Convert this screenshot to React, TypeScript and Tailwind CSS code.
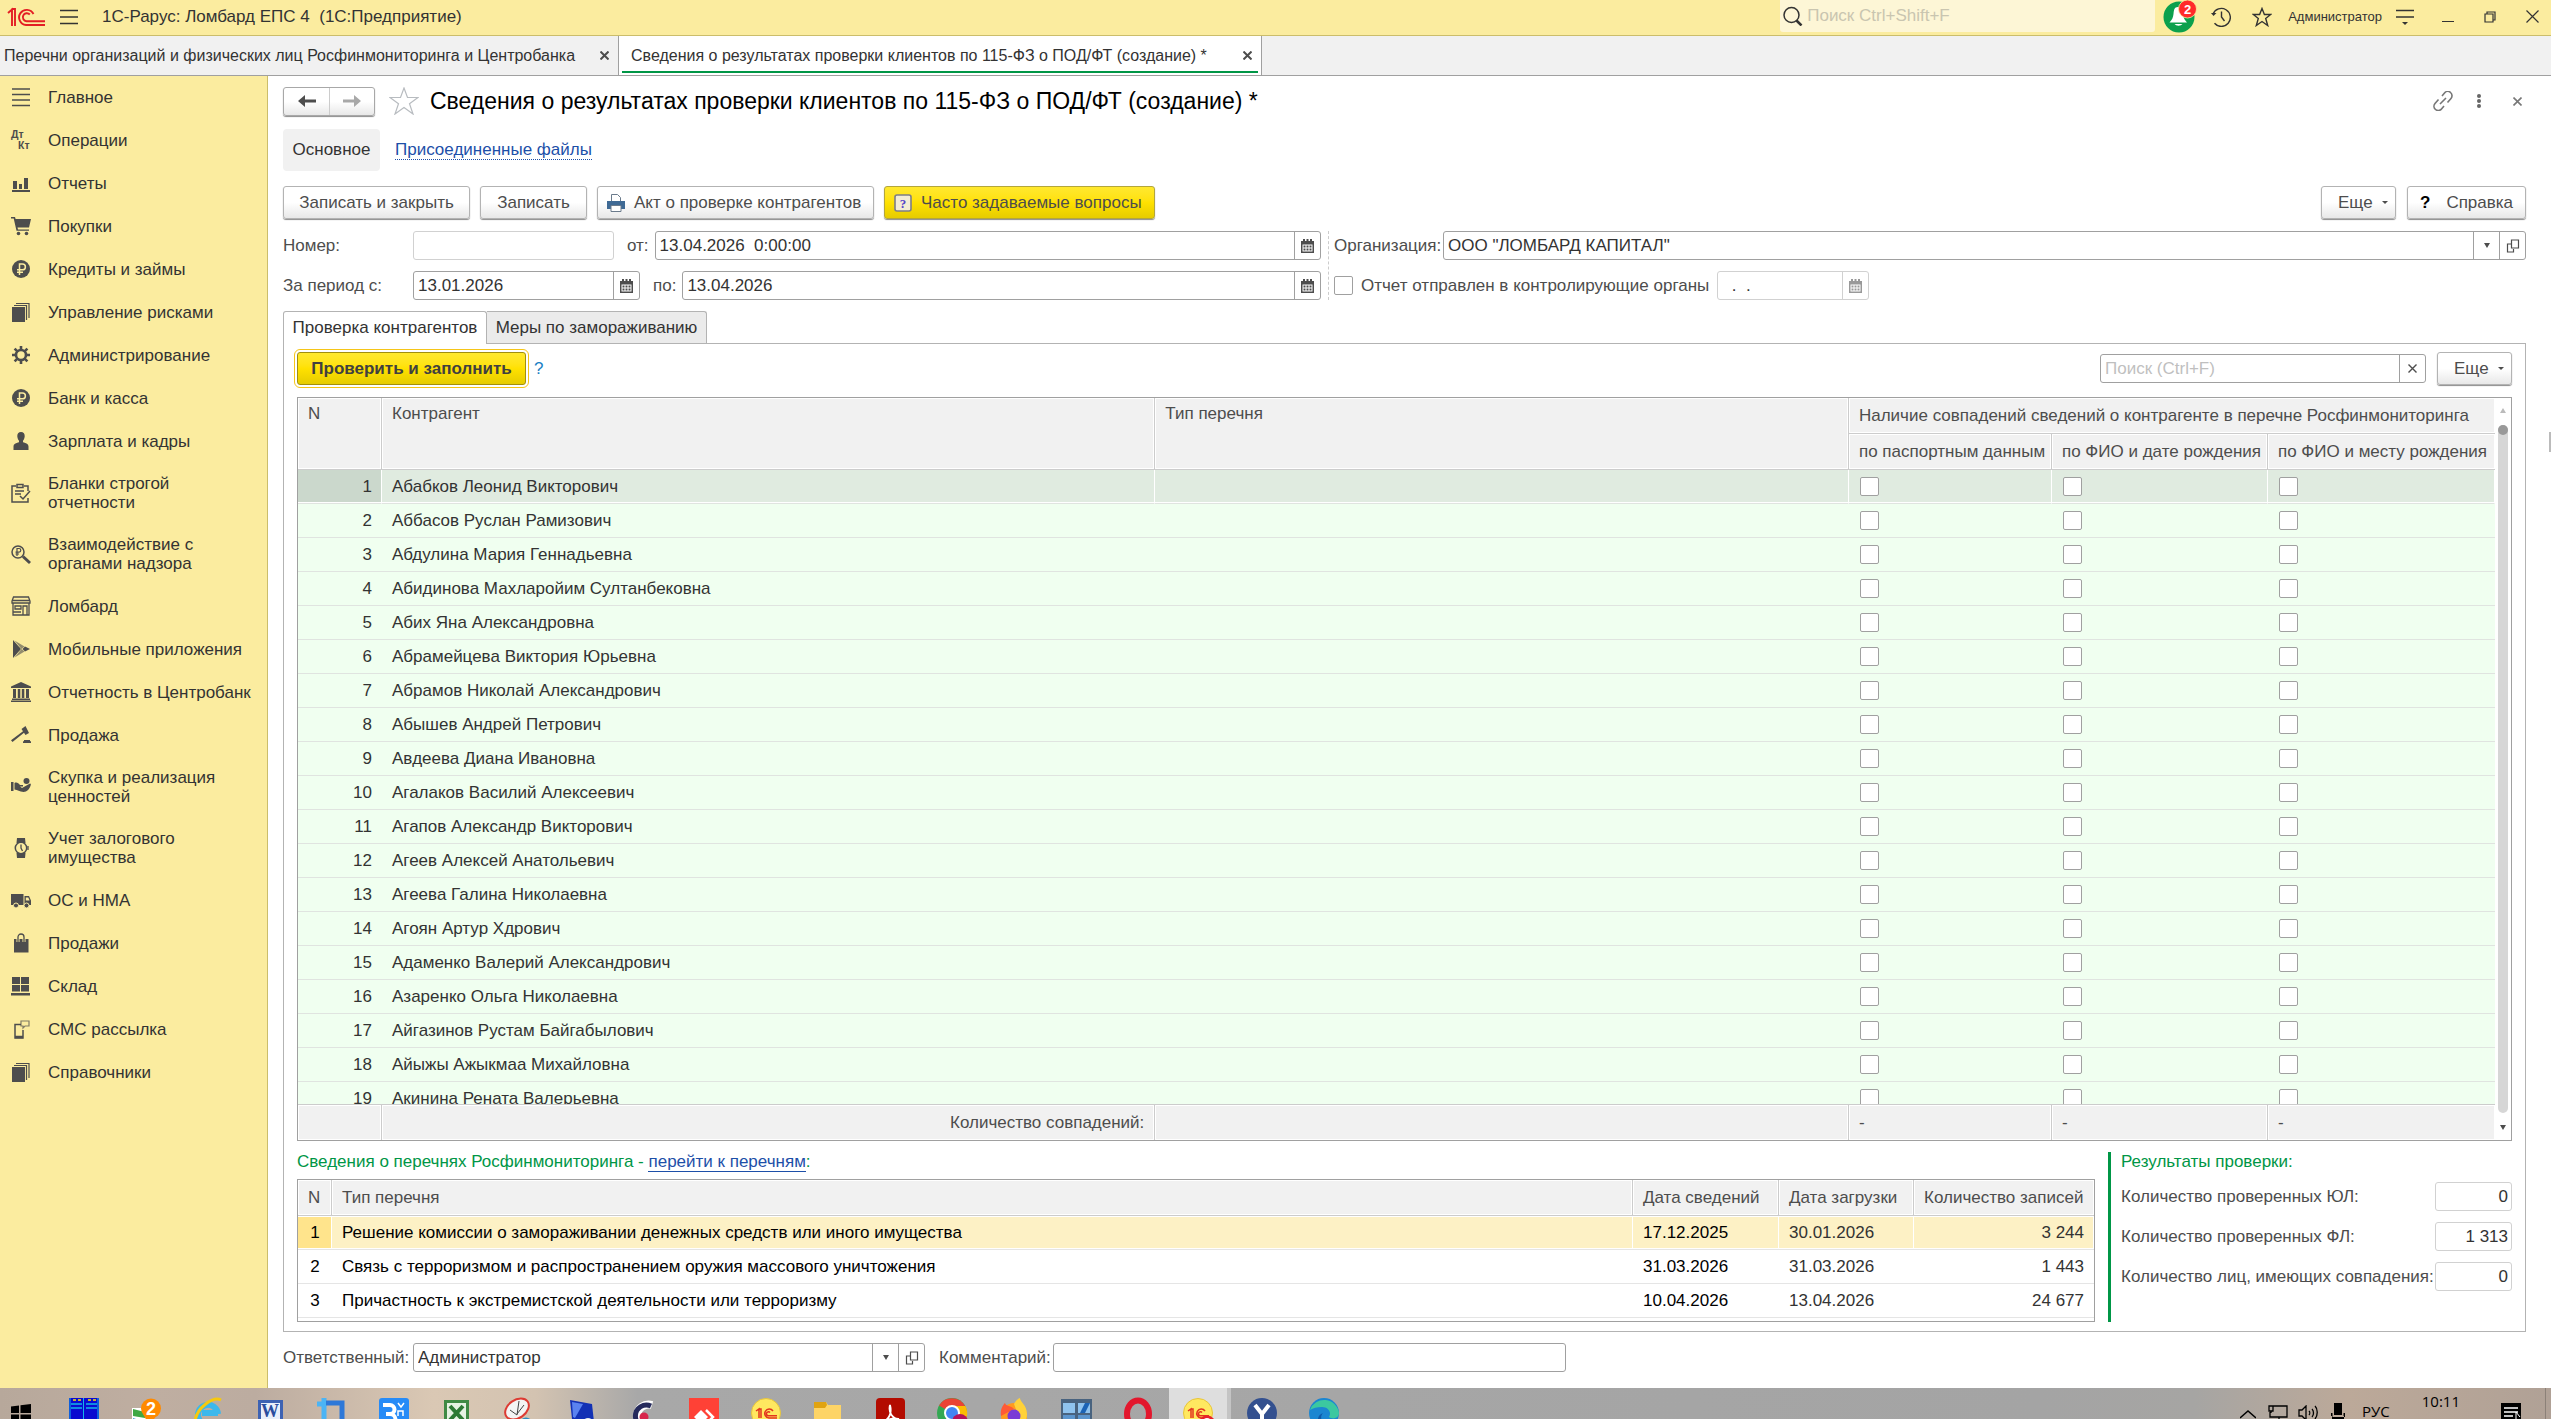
import type { ReactNode } from 'react';

const menu: { icon: string; title: string }[] = [
  { icon: 'main', title: 'Главное' },
  { icon: 'dtkt', title: 'Операции' },
  { icon: 'chart', title: 'Отчеты' },
  { icon: 'cart', title: 'Покупки' },
  { icon: 'ruble', title: 'Кредиты и займы' },
  { icon: 'books', title: 'Управление рисками' },
  { icon: 'gear', title: 'Администрирование' },
  { icon: 'ruble', title: 'Банк и касса' },
  { icon: 'person', title: 'Зарплата и кадры' },
  { icon: 'clipboard', title: 'Бланки строгой отчетности' },
  { icon: 'lens', title: 'Взаимодействие с органами надзора' },
  { icon: 'shop', title: 'Ломбард' },
  { icon: 'play', title: 'Мобильные приложения' },
  { icon: 'bank', title: 'Отчетность в Центробанк' },
  { icon: 'hammer', title: 'Продажа' },
  { icon: 'hand', title: 'Скупка и реализация ценностей' },
  { icon: 'watch', title: 'Учет залогового имущества' },
  { icon: 'truck', title: 'ОС и НМА' },
  { icon: 'bag', title: 'Продажи' },
  { icon: 'boxes', title: 'Склад' },
  { icon: 'sms', title: 'СМС рассылка' },
  { icon: 'books', title: 'Справочники' },
];

const clients = [
  'Абабков Леонид Викторович',
  'Аббасов Руслан Рамизович',
  'Абдулина Мария Геннадьевна',
  'Абидинова Махларойим Султанбековна',
  'Абих Яна Александровна',
  'Абрамейцева Виктория Юрьевна',
  'Абрамов Николай Александрович',
  'Абышев Андрей Петрович',
  'Авдеева Диана Ивановна',
  'Агалаков Василий Алексеевич',
  'Агапов Александр Викторович',
  'Агеев Алексей Анатольевич',
  'Агеева Галина Николаевна',
  'Агоян Артур Хдрович',
  'Адаменко Валерий Александрович',
  'Азаренко Ольга Николаевна',
  'Айгазинов Рустам Байгабылович',
  'Айыжы Ажыкмаа Михайловна',
  'Акинина Рената Валерьевна',
];

const checks = ['по паспортным данным', 'по ФИО и дате рождения', 'по ФИО и месту рождения'];

const lists = [
  ['Решение комиссии о замораживании денежных средств или иного имущества', '17.12.2025', '30.01.2026', '3 244'],
  ['Связь с терроризмом и распространением оружия массового уничтожения', '31.03.2026', '31.03.2026', '1 443'],
  ['Причастность к экстремистской деятельности или терроризму', '10.04.2026', '13.04.2026', '24 677'],
];

const menuIcons: Record<string, ReactNode> = {
  main: <path d="M1 2h18M1 7.5h18M1 13h18M1 18.5h18" stroke="currentColor" strokeWidth="1.3" />,
  dtkt: (
    <g fontFamily="Liberation Sans, sans-serif" fontWeight="bold" fontSize="10.5">
      <text x="0" y="8">Дт</text>
      <text x="7" y="19">Кт</text>
    </g>
  ),
  chart: <path d="M1 17h18v2H1zM2 8h4v8H2zM8 11h3v5H8zM13 5h4v11h-4z" />,
  cart: (
    <>
      <path d="M0 1h4l.6 2H20l-2 8.500H6.500l.5 2H18v1.300H5.500L2.700 2.500H0z" />
      <circle cx="7.500" cy="17.500" r="1.800" />
      <circle cx="15.500" cy="17.500" r="1.800" />
    </>
  ),
  ruble: (
    <>
      <circle cx="10" cy="10" r="9" />
      <path d="M8.500 16V5h3a2.800 2.800 0 0 1 0 5.800H6M6 13.300h6" fill="none" stroke="#fbec9f" strokeWidth="1.500" />
    </>
  ),
  books: (
    <>
      <path d="M1 5h13v15H1z" />
      <path d="M3 3.500h12.500V18M5 1.500h13V16" fill="none" stroke="currentColor" strokeWidth="1.200" />
    </>
  ),
  gear: (
    <>
      <circle cx="10" cy="10" r="5" fill="none" stroke="currentColor" strokeWidth="2.600" />
      <path d="M10 1v4M10 15v4M1 10h4M15 10h4M3.600 3.600l2.800 2.800M13.600 13.600l2.800 2.800M3.600 16.400l2.800-2.800M13.600 6.400l2.800-2.800" stroke="currentColor" strokeWidth="2.600" />
    </>
  ),
  person: <path d="M10 1c2.500 0 4 1.800 3.700 4.500-.2 2-.9 3.300-1.700 4.300v1.400c3 .9 5.500 1.600 5.500 4.300V19h-15v-3.500c0-2.700 2.500-3.400 5.500-4.300V9.800C7.200 8.800 6.500 7.500 6.300 5.500 6 2.800 7.500 1 10 1z" />,
  clipboard: (
    <g fill="none" stroke="currentColor" strokeWidth="1.500">
      <path d="M5 3H1v16h16v-4M17 8V3h-4" />
      <path d="M6 1.500h6v3H6zM4 8h9M4 11h6M9 13l3 3 7-8" />
    </g>
  ),
  lens: (
    <g fill="none" stroke="currentColor">
      <circle cx="7" cy="8" r="6" strokeWidth="1.500" />
      <path d="M6 12V4.500h2a1.800 1.800 0 0 1 0 3.600H4.500M4.500 10H8" strokeWidth="1.200" />
      <path d="M12 12.500l7 6.500" strokeWidth="3" />
    </g>
  ),
  shop: (
    <g fill="none" stroke="currentColor" strokeWidth="1.300">
      <path d="M2.500 1h15l1.500 4v2H1V5zM2 7v12h16V7M1 4.500h18M4 10h6v3H4zM12 19v-9h4v9M2 16h8" />
    </g>
  ),
  play: (
    <>
      <path d="M2 1v18l8-9z" />
      <path d="M3.500 1.500l10 6-3 2.500zM3.500 18.500l10-6-3-2.500z" opacity=".6" />
      <path d="M14 7.500l5 2.500-5 2.500-2.500-2.500z" />
    </>
  ),
  bank: <path d="M10 0l10 4.500V6H0V4.500zM2 7h3v9H2zM6.800 7h2.500v9H6.800zM10.800 7h2.500v9h-2.500zM15 7h3v9h-3zM1 16.500h18V18H1zM0 18.500h20V20H0z" />,
  hammer: <path d="M10.500 4l4-3 3.500 7-3.500 2-1.500-2.200L1.500 17 0 15.200 12 6.300zM13 15h6v1.200h1V18h-8v-1.800h1z" />,
  hand: (
    <>
      <path d="M0 5h2.500v9H0zM3.500 6c2-1 4 0 5.500 2h3v1.500H9l2 1.500 8-4.500c1 .3 1 1.200.7 1.800-1 3.700-3.700 6.700-7.200 6.700-4 0-6-2.500-9-2.500z" />
      <circle cx="15.500" cy="4" r="3" />
    </>
  ),
  watch: (
    <>
      <path d="M6 0h8l.5 5h-9zM5.500 15h9L14 20H6z" />
      <circle cx="10" cy="10" r="5.700" fill="none" stroke="currentColor" strokeWidth="1.500" />
      <path d="M10 6.500V10l1.500 3M17 8v4" stroke="currentColor" strokeWidth="1.300" fill="none" />
    </>
  ),
  truck: (
    <>
      <path d="M0 4h12.500v11H0zM13.500 6H18l2 4.500V15h-6.500z" />
      <path d="M14.800 7.500h2.500l1.300 3h-3.800z" fill="#fbec9f" />
      <circle cx="5" cy="15.500" r="2.500" stroke="#fbec9f" />
      <circle cx="15.500" cy="15.500" r="2.500" stroke="#fbec9f" />
    </>
  ),
  bag: (
    <>
      <path d="M3 6h14.500v13.500H3z" />
      <path d="M7 9V4a3 3 0 0 1 6 0v5" fill="none" stroke="#fbec9f" strokeWidth="3" />
      <path d="M7 9V4a3 3 0 0 1 6 0v5" fill="none" stroke="currentColor" strokeWidth="1.300" />
    </>
  ),
  boxes: <path d="M1 1h8v7H1zM10 1h8v7h-8zM1 9h8v6.500H1zM10 9h8v6.500h-8zM0 17h19v2.500H0z" />,
  sms: (
    <g fill="none" stroke="currentColor">
      <path d="M10 5.500H4V19h8v-8" strokeWidth="1.500" />
      <path d="M4 18h8" strokeWidth="2.500" />
      <path d="M10 2h8v5h-4l-2 2V7h-2z" strokeWidth="1.200" opacity=".7" />
    </g>
  ),
};

function Logo({ className }: { className: string }) {
  return (
    <svg viewBox="0 0 38 20" className={className} fill="none" stroke="#e31e24" strokeWidth="1.900">
      <path d="M1 6l4-3.500V19M8 19V2H4.500" />
      <path d="M26.500 7A7.600 7.600 0 1 0 19 18h19" />
      <path d="M22.800 7.500A4 4 0 1 0 19.500 14.200H38" />
    </svg>
  );
}

function CalendarIcon() {
  return (
    <svg viewBox="0 0 13 14" className="w-[13px] h-3.5" fill="currentColor">
      <path fillRule="evenodd" d="M0 2h2V0h2v2h1.500V0h2v2H9V0h2v2h2v12H0zM1.500 5.500v7h10v-7z" />
      <path d="M2.500 6.500h2v2h-2zM5.500 6.500h2v2h-2zM8.500 6.500h2v2h-2zM2.500 9.500h2v2h-2zM5.500 9.500h2v2h-2zM8.500 9.500h2v2h-2z" />
    </svg>
  );
}

function OpenIcon() {
  return (
    <svg viewBox="0 0 14 14" className="size-[14px]" fill="none" stroke="currentColor" strokeWidth="1.200">
      <path d="M5.500 1h7v8h-7zM5 5H1.500v8h6v-3" />
    </svg>
  );
}

function Triangle() {
  return <span className="border-x-[3px] border-t-[5px] border-x-transparent border-t-[#4d4d4d]" />;
}

const plain = 'border-[#b3b3b3] bg-linear-to-b from-white via-white to-[#e8e8e8]';
const yellow = 'border-[#b3a63c] bg-linear-to-b from-[#ffe82e] via-[#ffe100] to-[#e6cc00]';

function Button({ children, accent, className = '' }: { children: ReactNode; accent?: boolean; className?: string }) {
  return (
    <button className={`h-[33px] flex items-center rounded-[3px] border shadow-[0_1px_1px_#8c8c8c] whitespace-nowrap text-[#4d4d4d] ${accent ? yellow : plain} ${className}`}>
      {children}
    </button>
  );
}

function MoreButton() {
  return (
    <Button className="w-[75px] pl-4 gap-[9px]">
      Еще
      <span className="border-x-[3px] border-t-[3px] border-x-transparent border-t-[#4d4d4d]" />
    </Button>
  );
}

type FieldProps = {
  id: string;
  value?: string;
  label?: string;
  placeholder?: string;
  buttons?: { name: string; icon: ReactNode }[];
  disabled?: boolean;
  right?: boolean;
  className?: string;
};

function Field({ id, value = '', label, placeholder, buttons = [], disabled, right, className = '' }: FieldProps) {
  return (
    <div className={`h-[29px] flex rounded-[3px] border bg-white ${disabled ? 'border-[#d1d1d1] text-[#999]' : 'border-[#a0a0a0] text-[#4d4d4d]'} ${className}`}>
      <input
        id={id}
        aria-label={label}
        defaultValue={value}
        placeholder={placeholder}
        readOnly={disabled}
        className={`min-w-0 flex-1 outline-none bg-transparent text-[#333] placeholder:text-[#bfbfbf] ${right ? 'text-right px-[3px]' : 'px-1'}`}
      />
      {buttons.map((b) => (
        <button key={b.name} aria-label={b.name} className={`w-[26px] shrink-0 border-l flex items-center justify-center ${disabled ? 'border-[#d1d1d1]' : 'border-[#a0a0a0]'}`}>
          {b.icon}
        </button>
      ))}
    </div>
  );
}

const calendar = [{ name: 'Выбрать дату', icon: <CalendarIcon /> }];
const reference = [
  { name: 'Выбрать из списка', icon: <Triangle /> },
  { name: 'Открыть', icon: <OpenIcon /> },
];

function TopBar() {
  return (
    <header className="h-9 shrink-0 flex items-center pb-0.5 border-b border-[#cbbd6b] bg-[#fbec9f]">
      <Logo className="ml-[7px] w-[38px] h-5" />
      <button aria-label="Меню функций" className="ml-[15px]">
        <svg viewBox="0 0 18 16" className="w-[18px] h-4" stroke="#333" strokeWidth="1.500"><path d="M0 1.500h18M0 8h18M0 14.500h18" /></svg>
      </button>
      <span className="ml-6 whitespace-pre text-[#333]">1С-Рарус: Ломбард ЕПС 4  (1С:Предприятие)</span>

      <label className="ml-auto self-start w-[375px] h-8 flex items-center gap-1 pl-[3px] rounded-b-[3px] bg-[#fdf6d6]">
        <svg viewBox="0 0 20 20" className="size-5" fill="none" stroke="#333" strokeWidth="1.500">
          <circle cx="8.500" cy="9" r="7.500" />
          <path d="M13.500 14.500l5 5" strokeWidth="2.500" />
        </svg>
        <input aria-label="Поиск" placeholder="Поиск Ctrl+Shift+F" className="flex-1 outline-none bg-transparent placeholder:text-[#c9c5b0]" />
      </label>
      <button aria-label="Уведомления" className="ml-2">
        <svg viewBox="0 0 34 34" className="size-[34px]">
          <circle cx="16" cy="17" r="15.500" fill="#0ba04d" />
          <path d="M15 7c4 0 4.500 3 5 7 .4 3.500 1.500 6 4 8.500H6.500c2.500-2.500 3.600-5 4-8.500.5-4 .5-7 4.500-7zM11.500 24h8a4.500 3 0 0 1-8 0z" fill="#fff" />
          <circle cx="24.500" cy="9" r="9" fill="#ff2a2a" stroke="#fbec9f" strokeWidth=".8" />
          <text x="24.500" y="13.500" textAnchor="middle" fontSize="13" fontWeight="bold" fill="#fff" fontFamily="Liberation Sans, sans-serif">2</text>
        </svg>
      </button>
      <button aria-label="История" className="ml-3.5">
        <svg viewBox="0 0 20 20" className="size-5" fill="none" stroke="#333" strokeWidth="1.400">
          <path d="M2 7A9 9 0 1 1 3.500 16.300M10.500 4.500V10l3 4" />
          <path d="M0 6h5.500L2.500 9z" fill="#333" stroke="none" />
        </svg>
      </button>
      <button aria-label="Избранное" className="ml-[21px]">
        <svg viewBox="0 0 20 20" className="size-5" fill="none" stroke="#333" strokeWidth="1.400">
          <path d="M10 1.500l2.400 6h6.300l-5 4 2 7L10 14.500l-5.700 4 2-7-5-4h6.300z" />
        </svg>
      </button>
      <span className="ml-4 text-[13px] text-[#333]">Администратор</span>
      <button aria-label="Сервис и настройки" className="ml-3.5">
        <svg viewBox="0 0 18 18" className="size-[18px]" stroke="#333" strokeWidth="1.300">
          <path d="M0 2.500h18M0 9h18" />
          <path d="M6 14h6l-3 3z" fill="#333" stroke="none" />
        </svg>
      </button>
      <button aria-label="Свернуть" className="ml-7"><svg viewBox="0 0 12 12" className="size-3" stroke="#333"><path d="M0 10.500h12" /></svg></button>
      <button aria-label="Развернуть" className="ml-[30px]">
        <svg viewBox="0 0 12 12" className="size-3" fill="none" stroke="#333" strokeWidth="1.200"><path d="M1 3h8v8H1zM3 3V1h8v8H9" /></svg>
      </button>
      <button aria-label="Закрыть программу" className="ml-[30px] mr-3">
        <svg viewBox="0 0 13 13" className="size-[13px]" stroke="#333" strokeWidth="1.200"><path d="M.5.5l12 12M12.500.5l-12 12" /></svg>
      </button>
    </header>
  );
}

function CloseMark() {
  return <svg viewBox="0 0 9 9" className="size-[9px]" stroke="#4d4d4d" strokeWidth="2"><path d="M.5.5l8 8M8.500.5l-8 8" /></svg>;
}

function WindowTabs() {
  return (
    <div className="h-10 shrink-0 flex border-b border-[#a0a0a0] bg-[#f1f1f1] text-base leading-5 text-[#333] whitespace-nowrap">
      <div className="w-[619px] flex items-center justify-between pl-1 pr-[9px] border-r border-[#a0a0a0]">
        <button>Перечни организаций и физических лиц Росфинмониторинга и Центробанка</button>
        <button aria-label="Закрыть вкладку"><CloseMark /></button>
      </div>
      <div className="w-[643px] flex bg-white px-[3px] pb-0.5 border-r border-[#a0a0a0]">
        <div className="flex-1 flex items-center justify-between pl-[9px] pr-1.5 pt-1 border-b-2 border-[#009646]">
          <button>Сведения о результатах проверки клиентов по 115-ФЗ о ПОД/ФТ (создание) *</button>
          <button aria-label="Закрыть вкладку"><CloseMark /></button>
        </div>
      </div>
    </div>
  );
}

function Sidebar() {
  return (
    <nav className="w-[268px] shrink-0 border-r border-[#cbbd6b] bg-[#fbec9f]">
      {menu.map((item) => (
        <a key={item.title} href="#" className="min-h-[43px] flex items-center gap-[17px] pl-[11px] pr-4 pt-[11px] pb-3 leading-[19px] text-[#333]">
          <svg viewBox="0 0 20 20" className="size-5 -my-1 shrink-0 overflow-visible text-[#4d4d4d]" fill="currentColor">{menuIcons[item.icon]}</svg>
          <span className={item.title.length > 24 ? 'w-[170px]' : 'whitespace-nowrap'}>{item.title}</span>
        </a>
      ))}
    </nav>
  );
}

function TitleRow() {
  return (
    <div className="h-[30px] flex items-center">
      <div className="h-[29px] flex rounded-[3px] border border-[#a8a8a8] bg-linear-to-b from-white via-white to-[#e8e8e8] shadow-[0_1px_1px_#8c8c8c]">
        <button aria-label="Назад" className="w-[46px] flex items-center justify-center border-r border-[#ccc]">
          <svg viewBox="0 0 18 12" className="w-[18px] h-3" fill="#4d4d4d"><path d="M0 6l7-6v4.500h11v3H7V12z" /></svg>
        </button>
        <button aria-label="Вперед" className="w-[44px] flex items-center justify-center">
          <svg viewBox="0 0 18 12" className="w-[18px] h-3" fill="#a8a8a8"><path d="M18 6l-7-6v4.500H0v3h11V12z" /></svg>
        </button>
      </div>
      <button aria-label="Добавить в избранное" className="ml-3.5">
        <svg viewBox="0 0 30 28" className="w-[30px] h-7" fill="none" stroke="#b8bcc0" strokeWidth="1.200">
          <path d="M15 1l3.500 9.500H29l-8.500 6.200L24 27l-9-6.500L6 27l3.500-10.300L1 10.500h10.500z" />
        </svg>
      </button>
      <h1 className="ml-[11px] text-[23px] text-black whitespace-nowrap">Сведения о результатах проверки клиентов по 115-ФЗ о ПОД/ФТ (создание) *</h1>
      <button aria-label="Получить ссылку" className="ml-auto">
        <svg viewBox="0 0 20 20" className="size-5" fill="none" stroke="#777" strokeWidth="1.600">
          <path d="M9 5l2.500-3A4 4 0 0 1 18 7.500l-3.500 4M11 15l-2.500 3A4 4 0 0 1 2 12.500l3.500-4M7 13l6-6" />
        </svg>
      </button>
      <button aria-label="Меню формы" className="ml-[23px]">
        <svg viewBox="0 0 6 14" className="w-1.5 h-3.5" fill="#666"><circle cx="3" cy="2" r="2" /><circle cx="3" cy="7" r="2" /><circle cx="3" cy="12" r="2" /></svg>
      </button>
      <button aria-label="Закрыть" className="ml-[31px] mr-1">
        <svg viewBox="0 0 9 9" className="size-[9px]" stroke="#777" strokeWidth="1.600"><path d="M.5.5l8 8M8.500.5l-8 8" /></svg>
      </button>
    </div>
  );
}

function Toolbar() {
  return (
    <div className="mt-[15px] h-[33px] flex items-start gap-2.5">
      <Button className="w-[187px] justify-center">Записать и закрыть</Button>
      <Button className="w-[107px] justify-center">Записать</Button>
      <Button className="w-[277px] pl-[9px] gap-[9px]">
        <svg viewBox="0 0 18 18" className="size-[18px]">
          <path d="M4.500 8V.5h6l3 3V8z" fill="#fff" stroke="#6b7b8c" />
          <path d="M0 7h18v8H0z" fill="#3f6a95" />
          <path d="M4 11.500h10v6H4z" fill="#fff" stroke="#6b7b8c" />
        </svg>
        Акт о проверке контрагентов
      </Button>
      <Button accent className="w-[271px] pl-[9px] gap-[9px]">
        <svg viewBox="0 0 18 18" className="size-[18px]">
          <rect x="1" y="1" width="16" height="16" rx="2" fill="#f3ecd5" stroke="#7d7d86" strokeWidth="1.600" />
          <text x="9" y="14" textAnchor="middle" fontSize="13" fontWeight="bold" fill="#5645c9" fontFamily="Liberation Serif, serif">?</text>
        </svg>
        Часто задаваемые вопросы
      </Button>
      <div className="ml-auto flex gap-[11px]">
        <MoreButton />
        <Button className="w-[119px] pl-3 gap-4"><span className="font-bold text-black">?</span>Справка</Button>
      </div>
    </div>
  );
}

function Requisites() {
  return (
    <div className="mt-3 grid grid-cols-[1038fr_1192fr] gap-[13px] text-[#4d4d4d]">
      <div className="flex flex-col gap-[11px]">
        <div className="flex items-center">
          <label htmlFor="number" className="w-[130px]">Номер:</label>
          <Field id="number" disabled className="w-[201px]" />
          <label htmlFor="date" className="ml-[13px] mr-1.5">от:</label>
          <Field id="date" value="13.04.2026  0:00:00" buttons={calendar} className="flex-1" />
        </div>
        <div className="flex items-center">
          <label htmlFor="from" className="w-[130px]">За период с:</label>
          <Field id="from" value="13.01.2026" buttons={calendar} className="w-[227px]" />
          <label htmlFor="to" className="ml-[13px] mr-1.5">по:</label>
          <Field id="to" value="13.04.2026" buttons={calendar} className="flex-1" />
        </div>
      </div>
      <div className="relative flex flex-col gap-[11px]">
        <span className="absolute inset-y-0 -left-[6px] border-l border-dashed border-[#ccc]" />
        <div className="flex items-center">
          <label htmlFor="org" className="w-[109px] whitespace-nowrap">Организация:</label>
          <Field id="org" value={'ООО "ЛОМБАРД КАПИТАЛ"'} buttons={reference} className="flex-1" />
        </div>
        <div className="flex items-center">
          <input id="sent" type="checkbox" className="size-[19px] appearance-none rounded-[2px] border border-[#a0a0a0] bg-white" />
          <label htmlFor="sent" className="ml-2 mr-2 whitespace-nowrap">Отчет отправлен в контролирующие органы</label>
          <Field id="sentDate" label="Дата отправки" value="  .  ." disabled buttons={calendar} className="w-[152px]" />
        </div>
      </div>
    </div>
  );
}

const head = 'border-r border-b border-[#ccc] bg-[#f1f1f1] shadow-[inset_0_0_0_1px_#fff] font-normal text-left px-2.5 text-[#4d4d4d]';

function ClientsTable() {
  return (
    <div className="mt-3 min-h-0 flex-1 flex border border-[#a0a0a0]">
      <div className="flex-1 overflow-hidden">
        <table className="w-full table-fixed border-separate border-spacing-0">
          <colgroup>
            <col className="w-[84px]" />
            <col className="w-[35.2%]" />
            <col />
            <col className="w-[203px]" />
            <col className="w-[216px]" />
            <col className="w-[227px]" />
          </colgroup>
          <thead>
            <tr className="h-9">
              <th rowSpan={2} className={`${head} align-top pt-1.5`}>N</th>
              <th rowSpan={2} className={`${head} align-top pt-1.5`}>Контрагент</th>
              <th rowSpan={2} className={`${head} align-top pt-1.5`}>Тип перечня</th>
              <th colSpan={3} className={`${head} border-r-0 whitespace-nowrap`}>Наличие совпадений сведений о контрагенте в перечне Росфинмониторинга</th>
            </tr>
            <tr className="h-9">
              {checks.map((c, i) => (
                <th key={c} className={`${head} whitespace-nowrap ${i === 2 ? 'border-r-0' : ''}`}>{c}</th>
              ))}
            </tr>
          </thead>
          <tbody className="text-[#333]">
            {clients.map((name, i) => (
              <tr key={name} className={`h-[34px] ${i === 0 ? 'bg-[#e0ebe0] *:border-r *:border-r-white *:shadow-[inset_0_-1px_#fff]' : 'bg-[#f0fff0]'} *:border-b *:border-b-[#e0e4e0]`}>
                <td className={`text-right ${i === 0 ? 'pr-[9px] bg-[#cbd8cc]' : 'pr-2.5'}`}>{i + 1}</td>
                <td className="px-2.5">{name}</td>
                <td />
                {checks.map((c) => (
                  <td key={c} className="px-[11px]">
                    <input type="checkbox" aria-label={`${name}: ${c}`} className="block size-[19px] appearance-none rounded-[2px] border border-[#a0a0a0] bg-white" />
                  </td>
                ))}
              </tr>
            ))}
          </tbody>
          <tfoot className="sticky bottom-0">
            <tr className="h-9 *:border-t *:border-t-[#ccc]">
              <td className={`${head} border-b-0`} />
              <td className={`${head} border-b-0`}><div className="text-right">Количество совпадений:</div></td>
              <td className={`${head} border-b-0`} />
              {checks.map((c, i) => (
                <td key={c} className={`${head} border-b-0 ${i === 2 ? 'border-r-0' : ''}`}>-</td>
              ))}
            </tr>
          </tfoot>
        </table>
      </div>
      {/* Scrollbar */}
      <div className="w-4 flex flex-col items-center py-2.5 bg-white">
        <span className="border-x-[3px] border-b-[5px] border-x-transparent border-b-[#bbb]" />
        <div className="mt-3 mb-3 w-2.5 flex-1 rounded-full bg-[#d6d6d6]">
          <div className="size-2.5 rounded-full bg-[#999]" />
        </div>
        <Triangle />
      </div>
    </div>
  );
}

function ListsTable() {
  return (
    <div className="h-[143px] border border-[#a0a0a0]">
      <table className="w-full table-fixed border-separate border-spacing-0">
        <colgroup>
          <col className="w-[34px]" />
          <col />
          <col className="w-[146px]" />
          <col className="w-[135px]" />
          <col className="w-[180px]" />
        </colgroup>
        <thead>
          <tr className="h-9 whitespace-nowrap">
            <th className={head}>N</th>
            <th className={head}>Тип перечня</th>
            <th className={head}>Дата сведений</th>
            <th className={head}>Дата загрузки</th>
            <th className={`${head} border-r-0`}>Количество записей</th>
          </tr>
        </thead>
        <tbody className="text-black">
          {lists.map(([name, date, loaded, count], i) => (
            <tr key={name} className={`h-[34px] *:px-2.5 *:border-b *:border-b-[#e5e5e5] ${i === 0 ? 'bg-[#fdf1c5] *:shadow-[inset_-1px_-1px_#fff,inset_0_1px_#fff]' : ''}`}>
              <td className={`text-center ${i === 0 ? 'bg-[#ffe48c]' : ''}`}>{i + 1}</td>
              <td>{name}</td>
              <td>{date}</td>
              <td className="text-[#333]">{loaded}</td>
              <td className="text-right text-[#333]">{count}</td>
            </tr>
          ))}
        </tbody>
      </table>
    </div>
  );
}

function Results() {
  const rows = [
    ['ul', 'Количество проверенных ЮЛ:', '0'],
    ['fl', 'Количество проверенных ФЛ:', '1 313'],
    ['match', 'Количество лиц, имеющих совпадения:', '0'],
  ];
  return (
    <section className="w-[404px] shrink-0 border-l-[3px] border-[#009646] pl-2.5">
      <h2 className="h-5 leading-5 mb-2.5 text-[#009646]">Результаты проверки:</h2>
      <div className="flex flex-col gap-[11px]">
        {rows.map(([id, label, value]) => (
          <div key={id} className="flex items-center justify-between text-[#4d4d4d]">
            <label htmlFor={id} className="whitespace-nowrap">{label}</label>
            <Field id={id} value={value} disabled right className="w-[77px]" />
          </div>
        ))}
      </div>
    </section>
  );
}

function DocumentForm() {
  return (
    <main className="relative min-w-0 flex-1 flex flex-col bg-white pl-[15px] pr-[25px] pt-2.5 pb-4">
      <TitleRow />
      <div className="mt-[13px] h-[42px] flex items-center gap-[15px]">
        <button className="w-[97px] h-full rounded-[4px] bg-[#f1f1f1] text-[#333]">Основное</button>
        <a href="#" className="leading-[18px] border-b border-dotted border-[#1d4fa8] text-[#1d4fa8]">Присоединенные файлы</a>
      </div>
      <Toolbar />
      <Requisites />

      <div className="mt-[11px] flex text-[#333]">
        <button className="w-[204px] h-8 border border-b-0 border-[#b3b3b3] rounded-t-[3px]">Проверка контрагентов</button>
        <button className="w-[220px] h-8 border border-l-0 border-b-0 border-[#b3b3b3] rounded-tr-[3px] bg-[#ebebeb]">Меры по замораживанию</button>
      </div>
      {/* the active page tab has no line under it */}
      <div className="relative min-h-0 flex-1 flex flex-col border border-[#b3b3b3] px-[13px] pt-2 pb-[9px]">
        <span className="absolute -top-px left-0 w-[202px] h-px bg-white" />
        <div className="h-[33px] flex items-center">
          <button className="w-[229px] h-[33px] rounded-[3px] border border-[#a08f10] bg-linear-to-b from-[#ffe92e] via-[#ffe100] to-[#e6cc00] font-bold text-[#404040] outline outline-[#f5c518] outline-offset-2">
            Проверить и заполнить
          </button>
          <button className="ml-2 text-[#1b7fc4]">?</button>
          <Field
            id="search"
            label="Поиск в таблице"
            placeholder="Поиск (Ctrl+F)"
            buttons={[{ name: 'Очистить', icon: <svg viewBox="0 0 9 9" className="size-[9px]" stroke="#4d4d4d" strokeWidth="1.400"><path d="M.5.5l8 8M8.500.5l-8 8" /></svg> }]}
            className="ml-auto mr-[11px] w-[326px]"
          />
          <MoreButton />
        </div>
        <ClientsTable />
        <div className="mt-[11px] flex gap-[13px]">
          <section className="min-w-0 flex-1">
            <h2 className="h-5 leading-5 mb-[7px] text-[#009646]">
              Сведения о перечнях Росфинмониторинга - <a href="#" className="border-b border-[#1d4fa8] text-[#1d4fa8]">перейти к перечням</a>:
            </h2>
            <ListsTable />
          </section>
          <Results />
        </div>
      </div>

      <div className="mt-[11px] flex items-center text-[#4d4d4d]">
        <label htmlFor="author" className="w-[130px]">Ответственный:</label>
        <Field id="author" value="Администратор" buttons={reference} className="w-[512px]" />
        <label htmlFor="comment" className="ml-3.5 w-[114px]">Комментарий:</label>
        <Field id="comment" className="w-[513px]" />
      </div>
      <span className="absolute right-0 top-[356px] w-0.5 h-5 bg-[#bbb]" />
    </main>
  );
}

const svgText = { textAnchor: 'middle' as const, fontFamily: 'Liberation Sans, sans-serif', fontWeight: 'bold' };

function OneC() {
  return (
    <>
      <circle cx="15" cy="15" r="14.500" fill="#ffe860" stroke="#e8c53a" />
      <path d="M5 13l3-2v9M10 20V11H8M22 13a4.500 4.500 0 1 0-4 7h8M19 14.500a2 2 0 1 0-1 3.200h8" fill="none" stroke="#e3341e" strokeWidth="1.500" />
    </>
  );
}

const apps: { name: string; art: ReactNode; active?: boolean }[] = [
  { name: 'Серверы', art: <><path d="M0 0h30v30H0z" fill="#0a0ad0" /><path d="M2 6h11M2 10h11M17 6h11M17 10h11" stroke="#12b5e8" strokeWidth="1.500" /><path d="M4 2h3M9 2h3M19 2h3M24 2h3" stroke="#ffe600" strokeWidth="1.500" /><path d="M14.500 0v30M29 0v30M1 0v30" stroke="#12b5e8" /></> },
  { name: '2ГИС', art: <><path d="M1 10h14v20H1z" fill="#fff" /><path d="M2 11l12 3v6L2 18z" fill="#3fa845" /><path d="M2 20l12 4v6H2z" fill="#3d9be0" /><circle cx="20" cy="10.500" r="10" fill="#ff8a00" /><path d="M12 16l8 14 4-11z" fill="#ff8a00" /><text x="20" y="17" fontSize="18" fill="#fff" {...svgText}>2</text></> },
  { name: 'Internet Explorer', art: <><path d="M25 15H9M25 16a10 10 0 1 0-3 8" fill="none" stroke="#3cb8ec" strokeWidth="6" /><path d="M2 24C3 10 20-2 28 2" fill="none" stroke="#f7c90f" strokeWidth="3" /></> },
  { name: 'Word', art: <><path d="M3 2h25v28H3z" fill="#3d62b3" /><path d="M6 5h19v25H6z" fill="#e9effa" /><text x="15" y="19" fontSize="18" fill="#2a4d9e" {...svgText} fontFamily="Liberation Serif, serif">W</text></> },
  { name: 'Ножницы', art: <><path d="M0 6h9M7 0v30" stroke="#4bb4f5" strokeWidth="5" /><path d="M9 5h16v25" fill="none" stroke="#2e78d8" strokeWidth="5" /></> },
  { name: 'RealVNC', art: <><rect width="30" height="34" rx="3" fill="#268bf7" /><path d="M4 7h7a4.500 4.500 0 0 1 0 9H7M11 16a5 5 0 0 1 0 11" fill="none" stroke="#fff" strokeWidth="4" /><path d="M19 5l3 4 3-4M19 18v-5h5v5" fill="none" stroke="#fff" strokeWidth="1.500" /></> },
  { name: 'Excel', art: <><path d="M3 2h25v28H3z" fill="#3f8a44" /><path d="M6 5h19v25H6z" fill="#e5f2e2" /><path d="M9 8l13 14M22 8L9 22" stroke="#2d7a35" strokeWidth="4" /></> },
  { name: 'Планировщик', art: <><ellipse cx="14" cy="11" rx="13" ry="9" fill="#f4f4f4" stroke="#dd3b33" strokeWidth="2" transform="rotate(-35 14 11)" /><path d="M16 3l-2 14-7-5M14 16l7-9" stroke="#444" fill="none" /><circle cx="23" cy="26" r="5" fill="none" stroke="#2a8cc4" strokeWidth="3" /></> },
  { name: 'Удалённый рабочий стол', art: <><path d="M5 2l22 4 2 18-22-3z" fill="#1231b5" /><path d="M7 4l11 2-8 14-2-1z" fill="#5a83f0" /><circle cx="23" cy="26" r="6" fill="#e8eee8" /><path d="M20 26l2 3 4-5" stroke="#3d9c40" fill="none" strokeWidth="2" /></> },
  { name: 'Центр', art: <><path d="M25 7A11.500 11.500 0 1 0 25 29" fill="none" stroke="#fff" strokeWidth="8" /><path d="M24 8A11 11 0 1 0 24 28" fill="none" stroke="#252a5c" strokeWidth="5" /><circle cx="17" cy="19" r="4.500" fill="#d7264c" /></> },
  { name: 'AnyDesk', art: <><path d="M0 0h30v32H0z" fill="#ff4136" /><path d="M5 19l7-7 7 7-7 7z" fill="#fff" /><path d="M17 12l7 7-7 7" fill="none" stroke="#fff" strokeWidth="2.500" /></> },
  { name: '1С:Предприятие', art: <OneC /> },
  { name: 'Проводник', art: <><path d="M1 4h12l2 3h13v23H1z" fill="#fdd466" /><path d="M1 4h12l1 3-2 3H1z" fill="#e0a311" /><path d="M6 30V21h18v9" fill="#3b93dc" /></> },
  { name: 'Acrobat', art: <><rect x="1" width="29" height="34" rx="4" fill="#b30b00" /><path d="M8 24c6-3 9-9 7-17-2 8 3 14 9 14-6-2-11 0-16 3z" fill="none" stroke="#fff" strokeWidth="1.800" /></> },
  { name: 'Chrome', art: <><circle cx="15" cy="15" r="15" fill="#34a853" /><path d="M15 15L2 7.500A15 15 0 0 1 28 8z" fill="#ea4335" /><path d="M15 8h13.500A15 15 0 0 1 15 30l7-12z" fill="#fbbc05" /><circle cx="15" cy="15" r="7" fill="#4285f4" stroke="#fff" strokeWidth="2" /><circle cx="23" cy="24" r="8" fill="#b5135b" /></> },
  { name: 'Firefox', art: <><circle cx="15" cy="18" r="13" fill="#ff9a1f" /><path d="M15 6c2-4 5-6 6-6 0 4 7 7 7 16 0 5-2 9-5 12z" fill="#ffd23a" /><path d="M2 18C1 11 4 7 6 5c1 4 6 2 9 6z" fill="#ff5a36" /><circle cx="15" cy="18" r="6.500" fill="#7a3bd6" /></> },
  { name: 'Рабочие столы', art: <><path d="M0 1h31v30H0z" fill="#49637f" /><path d="M2 5h12v10H2zM17 5h12v10H17z" fill="#8fc3ee" /><path d="M2 17h12v10H2zM17 17h12v10H17z" fill="#5b94cc" /><path d="M24 5h5l-5 10h-5z" fill="#1b63b5" /></> },
  { name: 'Opera', art: <><ellipse cx="15" cy="16" rx="11" ry="13.500" fill="none" stroke="#e3172d" strokeWidth="6" /></> },
  { name: '1С:Предприятие (2)', active: true, art: <><OneC /><circle cx="24" cy="26" r="8.500" fill="#e8222a" /><path d="M20.500 24a3.500 3 0 0 1 7 0c0 2-4 3-6.500 6h7" fill="none" stroke="#fff" strokeWidth="2" /></> },
  { name: 'Яндекс', art: <><circle cx="15" cy="15" r="15" fill="#33508f" /><path d="M8 7l7 9 7-9M15 16v12" fill="none" stroke="#fff" strokeWidth="4" /></> },
  { name: 'Edge', art: <><circle cx="15" cy="15" r="15" fill="#1b86d1" /><path d="M1 12A15 15 0 0 1 30 15c0 5-6 7-10 4 3-5-1-10-7-10-5 0-9 1-12 3z" fill="#3cc8a0" /><path d="M14 15c-4 4-1 11 4 14h-6c-5-4-4-12 2-14z" fill="#0f5aa8" /></> },
];

function Taskbar() {
  return (
    <footer className="h-[31px] shrink-0 flex overflow-hidden bg-[linear-gradient(90deg,#b7a89b_0%,#bfaea1_6%,#bcaca0_10%,#dac8b4_17%,#d3c3b1_21%,#a8a8a8_25%,#a4a4a4_80%,#a6a5a3_86%,#bca999_92%,#b0a196_100%)] font-['Open_Sans','Noto_Sans',sans-serif] text-[15px] text-black">
      <button aria-label="Пуск" className="w-[53px] pl-[11px]">
        <svg viewBox="0 0 20 20" className="size-5 mt-4"><path d="M0 2.500L8 1.500V9H0zM9.500 1.200L20 0v9H9.500zM0 10.500h8V18l-8-1zM9.500 10.500H20V20L9.500 18.500z" /></svg>
      </button>
      {apps.map((app) => (
        <button key={app.name} aria-label={app.name} className={`w-[62px] h-[31px] shrink-0 flex justify-center pt-2.5 overflow-hidden ${app.active ? 'bg-[#dedede] border-r-4 border-[#c4c4c4]' : ''}`}>
          <svg viewBox="0 0 30 30" className="size-[30px] shrink-0 overflow-visible">{app.art}</svg>
        </button>
      ))}
      <div className="ml-auto flex items-start pt-[15px] pr-[5px]">
        <svg viewBox="0 0 16 10" className="mt-1.5 w-4 h-2.5" fill="none" stroke="#000" strokeWidth="1.500"><path d="M0 9l8-7 8 7" /></svg>
        <svg viewBox="0 0 20 16" className="ml-3 mt-0.5 w-5 h-4" fill="none" stroke="#000" strokeWidth="1.300"><path d="M5 1h14v11H2V7M1 1h4v5H1zM11 12v4M3 6v2" /></svg>
        <svg viewBox="0 0 22 16" className="ml-2.5 mt-0.5 w-[22px] h-4" fill="none" stroke="#000" strokeWidth="1.300"><path d="M1 5h3l4-4v14l-4-4H1zM11 6c1 1 1 3 0 4M14 4c2 2 2 6 0 8M17 1c3 3 3 9 0 13" /></svg>
        <svg viewBox="0 0 14 16" className="ml-[11px] w-3.5 h-4"><path d="M3 0h8v12H3zM0 10h1.500v4H14v-4h-1.500v3H0zM1 13h12v3H1z" /></svg>
        <span className="ml-[17px] leading-4">РУС</span>
        <time className="ml-8 -mt-3 leading-5">10:11</time>
        <svg viewBox="0 0 20 20" className="ml-[41px] size-5"><path d="M0 0h20v20H0z" /><path d="M3 5h14M3 9h14M3 13h9" stroke="#fff" strokeWidth="1.300" /><path d="M15 16V9l4 5" stroke="#fff" fill="none" /></svg>
        <span className="ml-6 -mt-[15px] h-[31px] border-l border-[#8c8178]" />
      </div>
    </footer>
  );
}

export default function App() {
  return (
    <div className="h-screen flex flex-col overflow-hidden bg-white font-['Liberation_Sans',Arial,sans-serif] text-[17px] leading-5">
      <TopBar />
      <WindowTabs />
      <div className="min-h-0 flex-1 flex">
        <Sidebar />
        <DocumentForm />
      </div>
      <Taskbar />
    </div>
  );
}
